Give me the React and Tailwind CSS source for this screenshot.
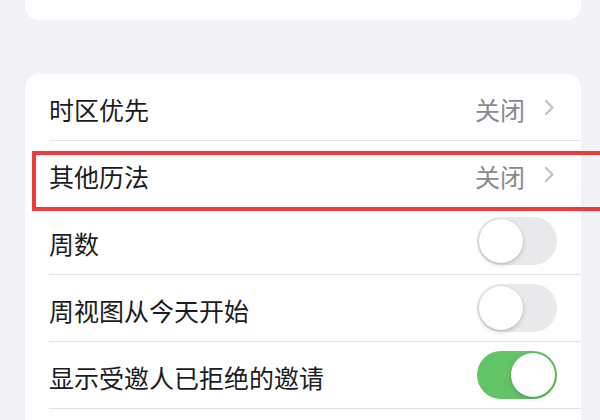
import React from "react";

const rows = [
  { label: "时区优先", value: "关闭" },
  { label: "其他历法", value: "关闭", marked: true },
  { label: "周数", toggle: false },
  { label: "周视图从今天开始", toggle: false },
  { label: "显示受邀人已拒绝的邀请", toggle: true },
];

function Chevron() {
  return (
    <svg width="11" height="17" viewBox="0 0 11 17" fill="none">
      <path d="M2 2l6.5 6.5L2 15" stroke="#c4c4c7" strokeWidth="2.4" strokeLinecap="round" strokeLinejoin="round" />
    </svg>
  );
}

function Toggle({ on }) {
  return (
    <div
      className={`w-[80px] h-[48px] rounded-full p-[2px] flex ${
        on ? "bg-[#62c466] justify-end" : "bg-[#e9e9eb] justify-start"
      }`}
    >
      <div className="w-[44px] h-[44px] rounded-full bg-white shadow-[0_2px_4px_rgba(0,0,0,0.18),0_0_0_0.5px_rgba(0,0,0,0.06)]" />
    </div>
  );
}

export default function App() {
  return (
    <div
      className="w-[600px] h-[420px] overflow-hidden bg-[#f2f2f7] pl-[25px] pr-[19px] flex flex-col"
      style={{ fontFamily: '"Noto Sans CJK SC", "Noto Sans", sans-serif' }}
    >
      {/* previous group, cut off at top */}
      <div className="h-[20px] shrink-0 bg-white rounded-b-[14px]" />

      {/* calendar options group */}
      <div className="mt-[54px] shrink-0 bg-white rounded-[14px] pl-[24px]">
        {rows.map((row) => (
          <div
            key={row.label}
            className="relative h-[67px] pr-[24px] border-b border-[#e3e3e6] flex items-center justify-between"
          >
            <span className="text-[25px] leading-none text-[#1c1c1e] pt-[4px]">{row.label}</span>
            {row.toggle === undefined ? (
              <div className="flex items-center gap-[19px] pr-[2px]">
                <span className="text-[25px] leading-none text-[#8a8a8e] pt-[4px]">{row.value}</span>
                <Chevron />
              </div>
            ) : (
              <Toggle on={row.toggle} />
            )}
            {row.marked && (
              <div className="absolute left-[-17px] right-[-37px] top-[10px] h-[60px] border-[4px] border-[#ef3b3b]" />
            )}
          </div>
        ))}
        <div className="h-[40px]" />
      </div>
    </div>
  );
}
